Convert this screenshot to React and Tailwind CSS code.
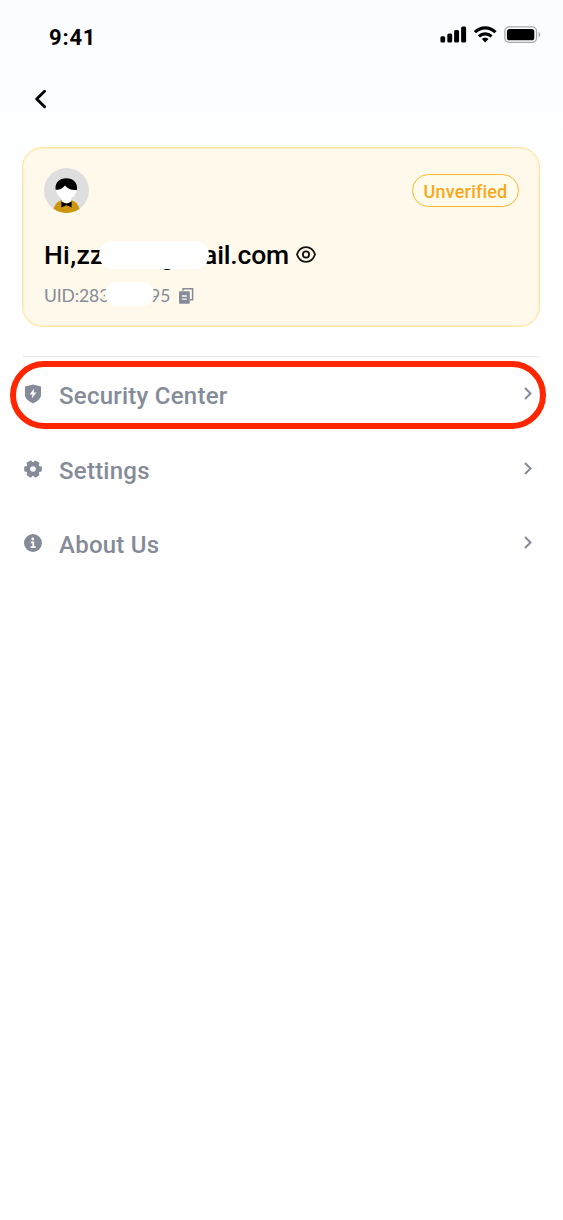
import React from "react";

function StatusIcons() {
  return (
    <svg width="101" height="18" viewBox="0 0 101 18" className="block">
      <rect x="0.4" y="10.3" width="4.8" height="6.3" rx="1.5" />
      <rect x="7.3" y="7.5" width="4.9" height="9.1" rx="1.5" />
      <rect x="14.1" y="3.9" width="5" height="12.7" rx="1.5" />
      <rect x="21.1" y="0.5" width="5" height="16.1" rx="1.5" />
      <g fill="none" stroke="#000" strokeWidth="3.2">
        <path d="M34.9 6.2 C41 0.4 49.4 0.4 55.5 6.2" />
        <path d="M38.9 10.4 C42.6 7 47.8 7 51.5 10.4" />
      </g>
      <path d="M41.9 12.9 C43.6 11.3 46.8 11.3 48.5 12.9 L45.2 16.4Z" />
      <rect x="64.9" y="0.9" width="31.6" height="15.4" rx="4.2" fill="#fff" stroke="#a6a7a9" strokeWidth="1.3" />
      <rect x="66.9" y="2.9" width="27.4" height="11.4" rx="2.6" />
      <path d="M98.6 6 C100.8 6.9 100.8 10.3 98.6 11.2Z" fill="#a6a7a9" />
    </svg>
  );
}

function Avatar() {
  return (
    <svg width="45" height="45" viewBox="0 0 45 45" className="block">
      <defs>
        <clipPath id="avatar-disc"><circle cx="22.5" cy="22.5" r="22.5" /></clipPath>
      </defs>
      <g clipPath="url(#avatar-disc)">
        <rect width="45" height="45" fill="#dedede" />
        <path d="M8.5 45 C10 37 13 33.3 17 32.5 H28 C32 33.3 35 37 36.5 45Z" fill="#cc960f" />
        <path d="M17.5 30 H27.5 L26.5 35 H18.5Z" fill="#fff" />
        <circle cx="22.3" cy="21.2" r="10.4" fill="#fff" />
        <path d="M11.6 21.8 C10.7 15 15.3 10.3 22.3 10.3 C29.3 10.3 33.9 15 33 21.8 C28.3 22.8 23.4 20.8 21 17.6 C18.6 20.8 15.4 22.2 11.6 21.8Z" />
        <path d="M17.4 33.4 L22.5 35.8 L27.6 33.4 V39.6 L22.5 37.2 L17.4 39.6Z" />
      </g>
    </svg>
  );
}

function EyeIcon() {
  return (
    <svg width="20" height="17" viewBox="0 0 20 17" fill="none" stroke="#111" strokeWidth="1.8" className="block">
      <path d="M1 8.5 C2.6 3.7 6 1.2 10 1.2 C14 1.2 17.4 3.7 19 8.5 C17.4 13.3 14 15.8 10 15.8 C6 15.8 2.6 13.3 1 8.5Z" />
      <circle cx="10" cy="8.5" r="3.1" />
    </svg>
  );
}

function CopyIcon() {
  return (
    <svg width="15" height="16" viewBox="0 0 15 16" className="block">
      <path d="M4 2.8 V0.8 H13.6 V11.7 H11" fill="none" stroke="#858b98" strokeWidth="1.5" />
      <rect x="0" y="3.2" width="10.8" height="12.6" rx="0.8" fill="#858b98" />
      <path d="M2.9 8 H7.9 M2.9 11.1 H7.9" stroke="#fff9eb" strokeWidth="1.3" />
    </svg>
  );
}

function ShieldIcon() {
  return (
    <svg width="18" height="20" viewBox="0 0 18 20" className="block">
      <path d="M9 0.6 L17 2.6 V10.8 C17 14.8 13.5 17.4 9 19.4 C4.5 17.4 1 14.8 1 10.8 V2.6Z" fill="#858b98" />
      <path d="M10.2 4.4 L5.6 10.5 H8.4 L7.8 14.5 L12.4 8.5 H9.6Z" fill="#fff" />
    </svg>
  );
}

function GearIcon() {
  return (
    <svg width="18" height="18" viewBox="0 0 18 18" className="block">
      <g fill="#858b98">
        <circle cx="9" cy="9" r="7" />
        <rect x="0.2" y="6.2" width="17.6" height="5.6" rx="1.3" />
        <rect x="0.2" y="6.2" width="17.6" height="5.6" rx="1.3" transform="rotate(60 9 9)" />
        <rect x="0.2" y="6.2" width="17.6" height="5.6" rx="1.3" transform="rotate(120 9 9)" />
      </g>
      <circle cx="9" cy="9" r="2.8" fill="#fff" />
    </svg>
  );
}

function InfoIcon() {
  return (
    <svg width="18" height="18" viewBox="0 0 18 18" className="block">
      <circle cx="9" cy="9" r="9" fill="#858b98" />
      <circle cx="8.8" cy="5" r="1.4" fill="#fff" />
      <path d="M6.8 8.4 H9.3 V13 M6.6 13.1 H11.6" fill="none" stroke="#fff" strokeWidth="1.8" />
    </svg>
  );
}

function Chevron() {
  return (
    <svg width="8" height="13" viewBox="0 0 8 13" fill="none" stroke="#858b98" strokeWidth="2" className="mr-2 mb-px block">
      <path d="M1 1 L6.5 6.5 L1 12" />
    </svg>
  );
}

function MenuRow({ icon, children }) {
  return (
    <div className="flex h-[74px] items-center">
      <div className="ml-px flex w-5 justify-center">{icon}</div>
      <div className="ml-4 flex-1 pt-[4px] text-2xl/8 font-medium tracking-[0.25px] text-[#858b98]">{children}</div>
      <Chevron />
    </div>
  );
}

export default function App() {
  return (
    <div className="min-h-[1220px] w-[563px] bg-white bg-linear-to-b from-[#fafcff] via-[#fbfdff] via-8% to-white to-15% font-['Roboto','Liberation_Sans',sans-serif] text-black">
      <header className="flex h-[72px] items-start justify-between pr-[22px] pl-[49px]">
        <div className="pt-6 text-[22px]/7 font-bold tracking-[0.8px]">9:41</div>
        <div className="pt-[26px]"><StatusIcons /></div>
      </header>

      <nav className="flex h-[75px] items-start pt-[17px] pl-[34px]">
        <svg width="14" height="20" viewBox="0 0 14 20" fill="none" stroke="#000" strokeWidth="2.9" strokeLinecap="round" strokeLinejoin="round">
          <path d="M10.6 2.2 L2.7 10 L10.6 17.8" />
        </svg>
      </nav>

      <main className="mr-[23px] ml-[22px]">
        <section className="h-[180px] rounded-[20px] border border-[#ffe6a6] bg-[#fff9eb] pt-5 pr-5 pl-[21px] inset-shadow-[0_0_0_1px_#fff0c8]">
          <div className="flex h-[45px] items-center justify-between">
            <Avatar />
            <div className="flex h-[33px] w-[107px] items-center justify-center rounded-full border border-[#fdb92c] bg-[#fffcec] pt-0.5 text-lg font-medium tracking-[0.2px] text-[#fba61b]">
              Unverified
            </div>
          </div>

          <div className="mt-[26px] flex h-8 items-center text-[26.5px]/8 font-medium">
            <span className="w-[58px] tracking-[0.3px]">Hi,zz</span>
            <span className="relative -ml-[3px] flex h-8 w-[110px] items-center">
              <span className="absolute top-px left-[61px]">g</span>
              <span className="relative z-10 mb-px h-7 w-full rounded-full bg-white" />
            </span>
            <span className="-ml-[6px] tracking-[-0.15px]">ail.com</span>
            <span className="-mt-px ml-[7px]"><EyeIcon /></span>
          </div>

          <div className="mt-[11px] flex h-6 items-center font-['Lato','Roboto',sans-serif] text-[17.5px]/6 text-[#858b98]">
            <span className="w-[65px] pt-1 tracking-[-0.1px]">UID:283</span>
            <span className="relative z-10 -ml-1 h-6 w-[49px] rounded-full bg-white" />
            <span className="-ml-1 pt-1">95</span>
            <span className="ml-[9px] pt-[3px]"><CopyIcon /></span>
          </div>
        </section>

        <div className="mt-[29px] ml-px border-t border-[#e9eaec]" />

        <div className="relative">
          <div className="pointer-events-none absolute top-[4px] -right-[6px] -left-[12px] z-10 h-[68px] rounded-full border-[6px] border-[#ff2600]" />
          <MenuRow icon={<ShieldIcon />}>Security Center</MenuRow>
          <div className="pt-px">
            <MenuRow icon={<GearIcon />}>Settings</MenuRow>
          </div>
          <MenuRow icon={<InfoIcon />}>About Us</MenuRow>
        </div>
      </main>
    </div>
  );
}
